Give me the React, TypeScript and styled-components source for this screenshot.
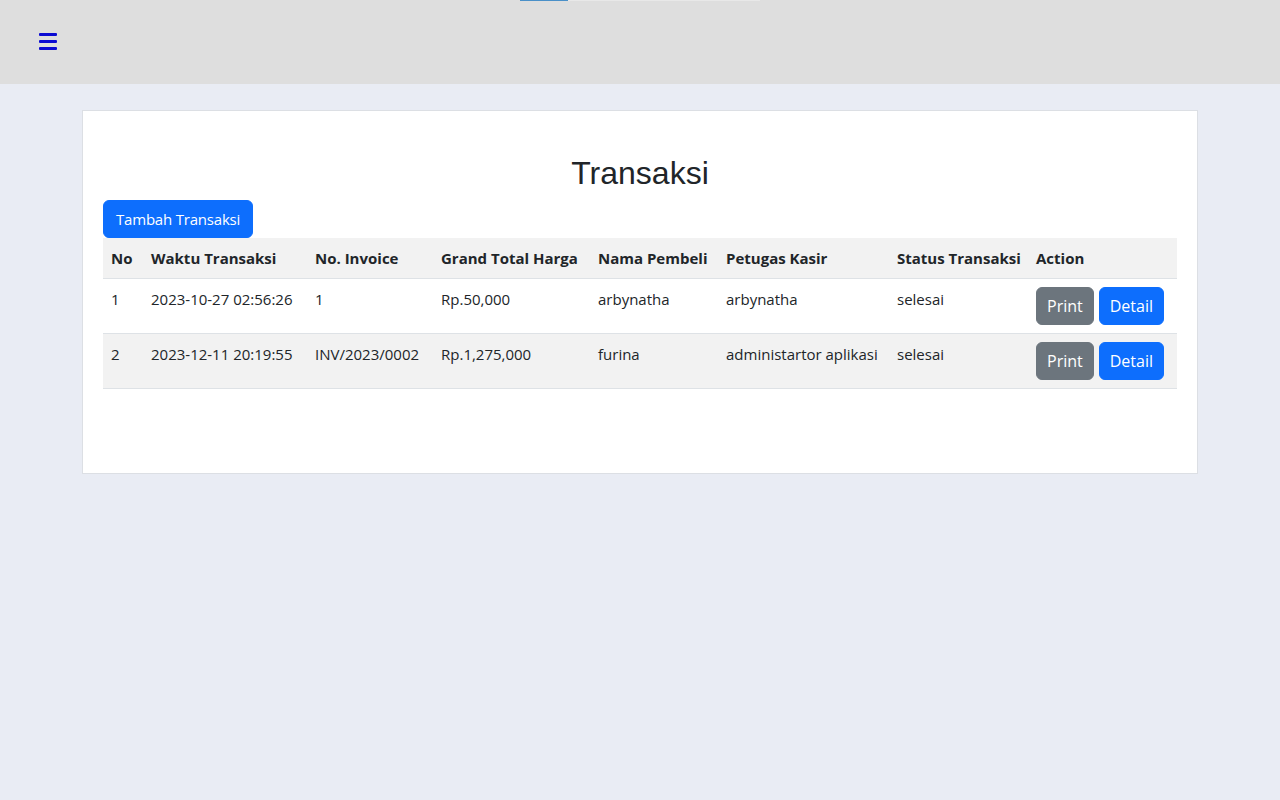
import React from "react";
import styled, { createGlobalStyle } from "styled-components";

const Global = createGlobalStyle`
  html, body { margin: 0; padding: 0; }
  body {
    background: #e9ecf4;
    font-family: "Open Sans", "Noto Sans", sans-serif;
    font-size: 15px;
    color: #212529;
  }
  * { box-sizing: border-box; }
`;

const Header = styled.header`
  position: relative;
  height: 84px;
  background: #dedede;
  display: flex;
  align-items: center;
  padding-left: 39px;
`;

const Progress = styled.div`
  position: absolute;
  top: 0;
  left: 520px;
  width: 240px;
  height: 1px;
  background: #e8e8e8;
`;

const ProgressFill = styled.div`
  width: 48px;
  height: 100%;
  background: #4a90c8;
`;

const MenuButton = styled.button`
  border: none;
  background: transparent;
  padding: 0;
  display: flex;
  flex-direction: column;
  gap: 4px;
  cursor: pointer;
  margin-top: -1px;
`;

const MenuBar = styled.span`
  display: block;
  width: 18px;
  height: 3px;
  border-radius: 1px;
  background: #0b0bd2;
`;

const Card = styled.main`
  width: 1116px;
  margin: 26px auto 0;
  background: #fff;
  border: 1px solid #dcdfe4;
  padding: 19px 20px 84px;
`;

const Title = styled.h2`
  font-family: "Liberation Sans", Arial, sans-serif;
  font-weight: 400;
  font-size: 32px;
  line-height: 38px;
  text-align: center;
  color: #212529;
  margin: 24px 0 8px;
`;

const Button = styled.button<{ $variant?: "primary" | "secondary" }>`
  font-family: "Open Sans", "Noto Sans", sans-serif;
  font-size: 16px;
  line-height: 24px;
  padding: 6px 10px;
  border-radius: 6px;
  border: 1px solid ${(p) => (p.$variant === "secondary" ? "#6c757d" : "#0d6efd")};
  background: ${(p) => (p.$variant === "secondary" ? "#6c757d" : "#0d6efd")};
  color: #fff;
  cursor: pointer;
`;

const AddButton = styled(Button)`
  display: block;
  font-size: 15px;
  padding: 6px 12px;
  letter-spacing: -0.2px;
`;

const Table = styled.table`
  width: 100%;
  border-collapse: collapse;
  table-layout: fixed;
`;

const Th = styled.th`
  text-align: left;
  font-weight: 700;
  padding: 8px 8px;
  line-height: 24px;
  background: #f2f2f2;
  border-bottom: 1px solid #dee2e6;
  white-space: nowrap;
`;

const Row = styled.tr<{ $striped?: boolean }>`
  background: ${(p) => (p.$striped ? "#f2f2f2" : "#fff")};
`;

const Td = styled.td`
  padding: 8px 8px;
  line-height: 24px;
  vertical-align: top;
  border-bottom: 1px solid #dee2e6;
  white-space: nowrap;
`;

const Actions = styled.div`
  display: flex;
  gap: 5px;
`;

const columns = [
  { label: "No", width: 40 },
  { label: "Waktu Transaksi", width: 164 },
  { label: "No. Invoice", width: 126 },
  { label: "Grand Total Harga", width: 157 },
  { label: "Nama Pembeli", width: 128 },
  { label: "Petugas Kasir", width: 171 },
  { label: "Status Transaksi", width: 139 },
  { label: "Action", width: 149 },
];

const rows = [
  ["1", "2023-10-27 02:56:26", "1", "Rp.50,000", "arbynatha", "arbynatha", "selesai"],
  ["2", "2023-12-11 20:19:55", "INV/2023/0002", "Rp.1,275,000", "furina", "administartor aplikasi", "selesai"],
];

export default function App() {
  return (
    <>
      <Global />
      <Header>
        <Progress>
          <ProgressFill />
        </Progress>
        <MenuButton aria-label="menu">
          <MenuBar />
          <MenuBar />
          <MenuBar />
        </MenuButton>
      </Header>
      <Card>
        <Title>Transaksi</Title>
        <AddButton>Tambah Transaksi</AddButton>
        <Table>
          <colgroup>
            {columns.map((c) => (
              <col key={c.label} style={{ width: c.width }} />
            ))}
          </colgroup>
          <thead>
            <tr>
              {columns.map((c) => (
                <Th key={c.label}>{c.label}</Th>
              ))}
            </tr>
          </thead>
          <tbody>
            {rows.map((r, i) => (
              <Row key={i} $striped={i % 2 === 1}>
                {r.map((v, j) => (
                  <Td key={j}>{v}</Td>
                ))}
                <Td>
                  <Actions>
                    <Button $variant="secondary">Print</Button>
                    <Button>Detail</Button>
                  </Actions>
                </Td>
              </Row>
            ))}
          </tbody>
        </Table>
      </Card>
    </>
  );
}
